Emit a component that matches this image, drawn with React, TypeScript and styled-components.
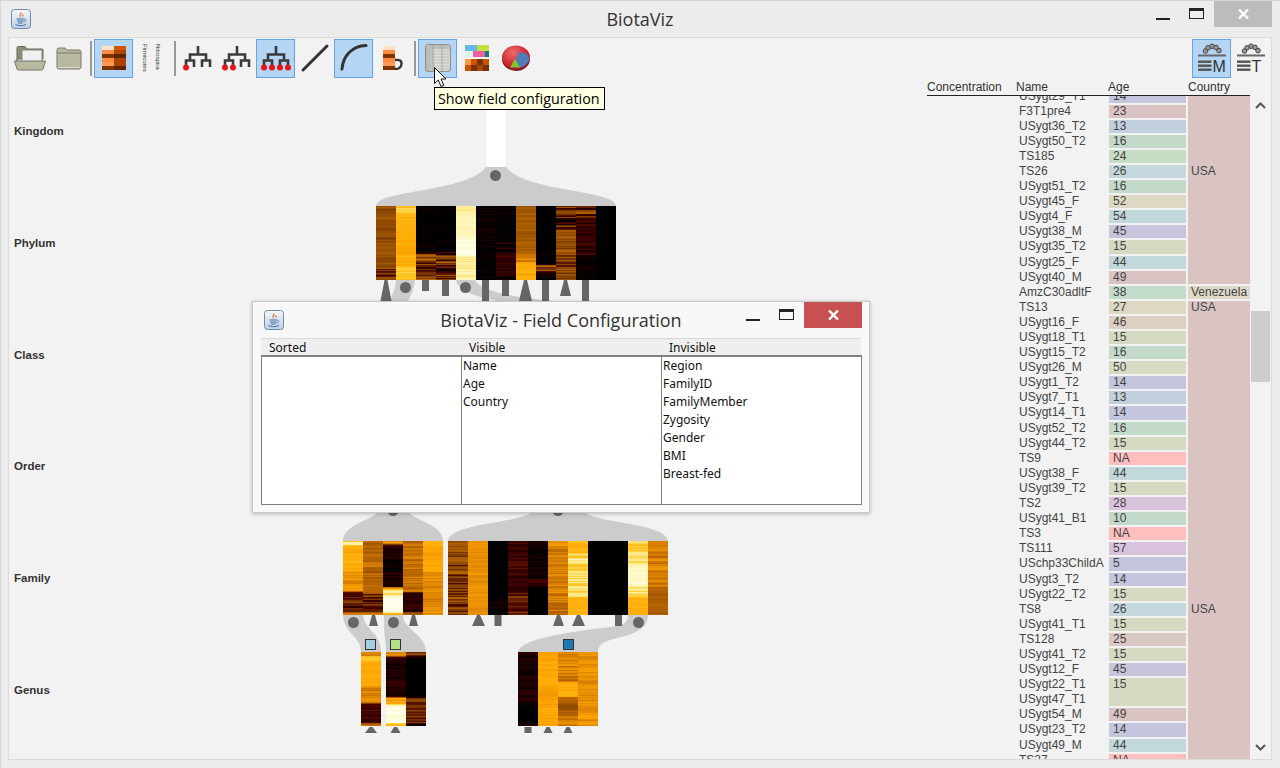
import React from "react";
import styled, { createGlobalStyle } from "styled-components";

const ROW = 15.1;

const GlobalStyle = createGlobalStyle`
  html, body {
    margin: 0;
    padding: 0;
    background: #f0f0f0;
  }
`;

// ---- data ----

interface Row {
  name: string;
  age?: string;
  span?: number;
}

const rows: Row[] = [
  { name: "USygt29_T1", age: "14" },
  { name: "F3T1pre4", age: "23" },
  { name: "USygt36_T2", age: "13" },
  { name: "USygt50_T2", age: "16" },
  { name: "TS185", age: "24" },
  { name: "TS26", age: "26" },
  { name: "USygt51_T2", age: "16" },
  { name: "USygt45_F", age: "52" },
  { name: "USygt4_F", age: "54" },
  { name: "USygt38_M", age: "45" },
  { name: "USygt35_T2", age: "15" },
  { name: "USygt25_F", age: "44" },
  { name: "USygt40_M", age: "49" },
  { name: "AmzC30adltF", age: "38" },
  { name: "TS13", age: "27" },
  { name: "USygt16_F", age: "46" },
  { name: "USygt18_T1", age: "15" },
  { name: "USygt15_T2", age: "16" },
  { name: "USygt26_M", age: "50" },
  { name: "USygt1_T2", age: "14" },
  { name: "USygt7_T1", age: "13" },
  { name: "USygt14_T1", age: "14" },
  { name: "USygt52_T2", age: "16" },
  { name: "USygt44_T2", age: "15" },
  { name: "TS9", age: "NA" },
  { name: "USygt38_F", age: "44" },
  { name: "USygt39_T2", age: "15" },
  { name: "TS2", age: "28" },
  { name: "USygt41_B1", age: "10" },
  { name: "TS3", age: "NA" },
  { name: "TS111", age: "57" },
  { name: "USchp33ChildA", age: "5" },
  { name: "USygt3_T2", age: "14" },
  { name: "USygt22_T2", age: "15" },
  { name: "TS8", age: "26" },
  { name: "USygt41_T1", age: "15" },
  { name: "TS128", age: "25" },
  { name: "USygt41_T2", age: "15" },
  { name: "USygt12_F", age: "45" },
  { name: "USygt22_T1", age: "15", span: 2 },
  { name: "USygt47_T1" },
  { name: "USygt54_M", age: "49" },
  { name: "USygt23_T2", age: "14" },
  { name: "USygt49_M", age: "44" },
  { name: "TS27", age: "NA" },
];

const ageColors: Record<string, string> = {
  "5": "#c3c6dc",
  "10": "#c3dacb",
  "13": "#c3cfdc",
  "14": "#c3c6dc",
  "15": "#d6dac3",
  "16": "#c3dacb",
  "23": "#dac3c3",
  "24": "#c6dcc3",
  "25": "#dac9c3",
  "26": "#c3d7dc",
  "27": "#dcd8c3",
  "28": "#d9c3dc",
  "38": "#c3dccc",
  "44": "#c3d8da",
  "45": "#c9c3dc",
  "46": "#dcd0c3",
  "49": "#dac3c3",
  "50": "#d6dcc3",
  "52": "#dcd8c3",
  "54": "#c3d8da",
  "57": "#d9c3dc",
  NA: "#ffbfbf",
};

const ranks = ["Kingdom", "Phylum", "Class", "Order", "Family", "Genus"];
const sortedFields: string[] = [];
const visibleFields = ["Name", "Age", "Country"];
const invisibleFields = ["Region", "FamilyID", "FamilyMember", "Zygosity", "Gender", "BMI", "Breast-fed"];

// ---- heat maps ----

type Band = [number, number, number, number];

const heatStops: [number, number[]][] = [
  [0, [0, 0, 0]],
  [0.2, [70, 0, 0]],
  [0.35, [135, 70, 0]],
  [0.5, [190, 105, 0]],
  [0.65, [255, 165, 0]],
  [0.8, [255, 200, 40]],
  [0.9, [255, 240, 160]],
  [1, [255, 255, 235]],
];

function heatColor(value: number) {
  const v = Math.max(0, Math.min(1, value));
  for (let i = 1; i < heatStops.length; i++) {
    const [p1, c1] = heatStops[i];
    const [p0, c0] = heatStops[i - 1];
    if (v <= p1) {
      const t = (v - p0) / (p1 - p0);
      const c = c0.map((n, k) => Math.round(n + (c1[k] - n) * t));
      return `rgb(${c[0]},${c[1]},${c[2]})`;
    }
  }
  return "rgb(255,255,235)";
}

function makeRandom(seed: number) {
  let s = seed;
  return () => {
    s = (s * 9301 + 49297) % 233280;
    return s / 233280;
  };
}

const phylumColumns: Band[][] = [
  [[0, 0.8, 0.38, 0.07], [0.8, 0.95, 0.3, 0.15], [0.95, 1, 0.4, 0.05]],
  [[0, 0.1, 0.8, 0.08], [0.1, 0.5, 0.69, 0.04], [0.5, 0.65, 0.65, 0.02], [0.65, 0.8, 0.7, 0.05], [0.8, 1, 0.78, 0.08]],
  [[0, 0.62, 0, 0.05], [0.62, 1, 0.33, 0.2]],
  [[0, 0.62, 0, 0.03], [0.62, 1, 0.3, 0.22]],
  [[0, 0.1, 0.9, 0.05], [0.1, 0.4, 0.93, 0.03], [0.4, 0.65, 0.98, 0.02], [0.65, 1, 0.9, 0.05]],
  [[0, 1, 0.01, 0.06]],
  [[0, 0.5, 0.01, 0.06], [0.5, 1, 0.09, 0.13]],
  [[0, 0.6, 0.43, 0.05], [0.6, 0.75, 0.55, 0.08], [0.75, 1, 0.68, 0.05]],
  [[0, 0.62, 0, 0], [0.62, 0.77, 0.02, 0.05], [0.77, 0.88, 0.3, 0.25], [0.88, 1, 0.04, 0.05]],
  [[0, 0.3, 0.2, 0.25], [0.3, 0.6, 0.38, 0.1], [0.6, 1, 0.35, 0.12]],
  [[0, 0.2, 0.25, 0.2], [0.2, 0.65, 0.12, 0.13], [0.65, 1, 0.03, 0.06]],
  [[0, 1, 0, 0]],
];

const familyLeft: Band[][] = [
  [[0, 0.05, 0.85, 0.1], [0.05, 0.4, 0.67, 0.05], [0.4, 0.67, 0.6, 0.05], [0.67, 0.95, 0.22, 0.15], [0.95, 1, 0.6, 0.02]],
  [[0, 0.7, 0.48, 0.08], [0.7, 0.95, 0.25, 0.15], [0.95, 1, 0.6, 0]],
  [[0, 0.04, 0.6, 0.1], [0.04, 0.62, 0.1, 0.1], [0.62, 0.72, 0.85, 0.08], [0.72, 0.95, 1, 0.03], [0.95, 1, 0.75, 0.1]],
  [[0, 0.68, 0.5, 0.08], [0.68, 0.95, 0.12, 0.1], [0.95, 1, 0.5, 0.05]],
  [[0, 0.4, 0.67, 0.05], [0.4, 1, 0.58, 0.05]],
];

const familyRight: Band[][] = [
  [[0, 1, 0.33, 0.15]],
  [[0, 1, 0.6, 0.03]],
  [[0, 0.75, 0, 0.02], [0.75, 0.9, 0.04, 0.05], [0.9, 1, 0, 0]],
  [[0, 0.7, 0.17, 0.08], [0.7, 1, 0.28, 0.1]],
  [[0, 0.5, 0.04, 0.06], [0.5, 0.6, 0.1, 0.12], [0.6, 1, 0, 0]],
  [[0, 0.8, 0.55, 0.08], [0.8, 1, 0.5, 0.08]],
  [[0, 0.15, 0.72, 0.05], [0.15, 0.75, 0.85, 0.08], [0.75, 1, 0.7, 0.04]],
  [[0, 1, 0, 0.01]],
  [[0, 1, 0, 0.01]],
  [[0, 0.3, 0.82, 0.08], [0.3, 0.6, 0.95, 0.03], [0.6, 0.75, 0.85, 0.08], [0.75, 1, 0.7, 0.03]],
  [[0, 0.6, 0.55, 0.06], [0.6, 1, 0.45, 0.05]],
];

const genusA: Band[][] = [
  [[0, 0.05, 0.55, 0.03], [0.05, 0.1, 0.85, 0.05], [0.1, 0.45, 0.67, 0.04], [0.45, 0.68, 0.56, 0.06], [0.68, 0.95, 0.18, 0.12], [0.95, 1, 0.55, 0]],
];

const genusB: Band[][] = [
  [[0, 0.05, 0.6, 0.05], [0.05, 0.6, 0.1, 0.08], [0.6, 0.7, 0.7, 0.1], [0.7, 0.95, 0.98, 0.04], [0.95, 1, 0.7, 0]],
  [[0, 0.05, 0.3, 0.1], [0.05, 0.6, 0, 0], [0.6, 0.95, 0.3, 0.1], [0.95, 1, 0, 0]],
];

const genusC: Band[][] = [
  [[0, 0.7, 0.08, 0.07], [0.7, 0.95, 0, 0], [0.95, 1, 0.1, 0]],
  [[0, 1, 0.66, 0.04]],
  [[0, 0.4, 0.55, 0.08], [0.4, 0.6, 0.7, 0.05], [0.6, 0.85, 0.45, 0.08], [0.85, 1, 0.55, 0.05]],
  [[0, 1, 0.6, 0.05]],
];

function HeatMap({ x, y, columns, seed }: { x: number; y: number; columns: Band[][]; seed: number }) {
  const random = makeRandom(seed);
  const height = 74;
  const cells: React.ReactNode[] = [];
  columns.forEach((bands, c) => {
    let wobble = 0;
    let level = bands[0][2];
    for (let r = 0; r < height; r++) {
      const frac = r / height;
      const band = bands.find((b) => frac >= b[0] && frac < b[1]) ?? bands[bands.length - 1];
      // bands run into each other over a few rows, the noise is only lightly smoothed
      level += (band[2] - level) * 0.55;
      wobble = 0.35 * wobble + 0.65 * (random() - 0.5) * 2;
      const value = level + wobble * band[3] * 1.25;
      cells.push(<rect key={`${c}-${r}`} x={x + c * 20} y={y + r} width={20} height={1} fill={heatColor(value)} />);
    }
  });
  return <g shapeRendering="crispEdges">{cells}</g>;
}

// ---- drawn icons ----

function JavaIcon() {
  return (
    <svg width="20" height="20" viewBox="0 0 20 20">
      <defs>
        <linearGradient id="javaBg" x1="0" y1="0" x2="0" y2="1">
          <stop offset="0" stopColor="#f2f7fc" />
          <stop offset="1" stopColor="#bcd0e4" />
        </linearGradient>
      </defs>
      <rect x="0.5" y="0.5" width="19" height="19" rx="3" fill="url(#javaBg)" stroke="#6f8aa5" />
      <path d="M10 3 C12 5 8 6 10 9 C7 7 9 5 10 3 Z M12 5 C11 6 11 7 11.5 8 C12.5 7 13 6 12 5 Z" fill="#e8701a" />
      <path d="M5.5 10 H13 M6 12 H12.5 M7 14 H11.5" stroke="#3f6f9f" strokeWidth="1" fill="none" />
      <path d="M13 10 C15.5 10 15.5 12.5 12.5 13" stroke="#3f6f9f" strokeWidth="0.8" fill="none" />
      <path d="M4.5 15.5 C7 17 12 17 15 15.5" stroke="#3f6f9f" strokeWidth="1" fill="none" />
    </svg>
  );
}

function OpenFolderIcon() {
  return (
    <svg width="32" height="26" viewBox="0 0 32 26">
      <path d="M3 23 V3 Q3 1.5 4.5 1.5 H11 L13 4 H28 Q29 4 29 5 V14 H3 Z" fill="#8d8d78" stroke="#66665a" />
      <rect x="8" y="5" width="20" height="12" fill="#f0f0f0" stroke="#88887a" />
      <path d="M0.5 16 H31.5 L29 24 Q28.8 25 27.5 25 H4.5 Q3.2 25 3 24 Z" fill="#b9b9a2" stroke="#77776a" />
    </svg>
  );
}

function ClosedFolderIcon() {
  return (
    <svg width="26" height="24" viewBox="0 0 26 24">
      <path d="M1 4 Q1 2 3 2 H9 L11 4 H23 Q25 4 25 6 V21 Q25 23 23 23 H3 Q1 23 1 21 Z" fill="#b9b9a2" stroke="#7a7a6c" />
      <path d="M1.5 7 H24.5" stroke="#8e8e7d" strokeWidth="1.5" />
      <path d="M2 21.5 H24" stroke="#dcdccb" strokeWidth="1" />
    </svg>
  );
}

const stackLeft = ["#ffe0c8", "#ff8c45", "#7f3300", "#ff8c45", "#ff9a55", "#7f3300"];
const stackRight = ["#d45500", "#b04500", "#5c2500", "#a84400", "#a84400", "#5c2500"];

function HeatStackIcon() {
  return (
    <svg width="24" height="24" viewBox="0 0 24 24" shapeRendering="crispEdges">
      {stackLeft.map((fill, i) => (
        <rect key={i} x="0" y={i * 4} width="12" height="4" fill={fill} />
      ))}
      {stackRight.map((fill, i) => (
        <rect key={i} x="12" y={i * 4} width="12" height="4" fill={fill} />
      ))}
    </svg>
  );
}

function SidewaysTextIcon() {
  return (
    <svg width="24" height="30" viewBox="0 0 24 30">
      <text transform="translate(2 1) rotate(90)" fontSize="6" fontFamily="Liberation Sans, sans-serif" fill="#333">
        Firmicutes
      </text>
      <text transform="translate(15 1) rotate(90)" fontSize="6" fontFamily="Liberation Sans, sans-serif" fill="#333">
        Nitrospira
      </text>
    </svg>
  );
}

function TreeIcon({ dots }: { dots: number }) {
  const leaves = [4, 12, 20, 28];
  return (
    <svg width="32" height="32" viewBox="0 0 32 32">
      <path
        d="M16 4 V12.5 M8 18.5 V12.5 H24 V18.5 M4 25 V18.5 H12 V25 M20 25 V18.5 H28 V25"
        fill="none"
        stroke="#3a3a3a"
        strokeWidth="2.6"
      />
      {leaves.slice(0, dots).map((x) => (
        <circle key={x} cx={x} cy="25.5" r="3" fill="#e8141c" />
      ))}
    </svg>
  );
}

function LineIcon() {
  return (
    <svg width="32" height="32" viewBox="0 0 32 32">
      <path d="M4 28 L28 4" stroke="#333" strokeWidth="3" strokeLinecap="round" />
    </svg>
  );
}

function CurveIcon() {
  return (
    <svg width="32" height="32" viewBox="0 0 32 32">
      <path d="M4 27 C5 14 14 4 28 3.5" fill="none" stroke="#333" strokeWidth="3" strokeLinecap="round" />
    </svg>
  );
}

function StackLoopIcon() {
  return (
    <svg width="20" height="24" viewBox="0 0 20 24">
      <g shapeRendering="crispEdges">
        {stackLeft.map((fill, i) => (
          <rect key={i} x="0" y={i * 4} width="12" height="4" fill={fill} />
        ))}
      </g>
      <path d="M12 14 Q19 13 18.5 18 Q18 23 12 23" fill="none" stroke="#333" strokeWidth="2.4" />
    </svg>
  );
}

function TableIcon() {
  return (
    <svg width="26" height="28" viewBox="0 0 26 28">
      <defs>
        <linearGradient id="tableBg" x1="0" y1="0" x2="1" y2="0">
          <stop offset="0" stopColor="#b4b4af" />
          <stop offset="0.3" stopColor="#c6c6c1" />
          <stop offset="0.36" stopColor="#dededa" />
          <stop offset="1" stopColor="#d6d6d1" />
        </linearGradient>
      </defs>
      <rect x="0.5" y="0.5" width="25" height="27" rx="2.5" fill="url(#tableBg)" stroke="#8e8e8e" />
      <rect x="1" y="1" width="24" height="4" fill="#bcbcb8" />
      {[7, 10, 13, 16, 19, 22, 25].map((y) => (
        <path key={y} d={`M1.5 ${y} H24.5`} stroke="#c2c2bc" strokeWidth="1" />
      ))}
      <path d="M8 1 V27 M17 1 V27" stroke="#a8a8a4" strokeWidth="1" />
    </svg>
  );
}

function ColorGridIcon() {
  const checker = [
    ["#ff9944", "#cc5500", "#7a3000", "#cc5500"],
    ["#cc5500", "#7a3000", "#a84400", "#7a3000"],
  ];
  return (
    <svg width="24" height="26" viewBox="0 0 24 26" shapeRendering="crispEdges">
      <rect x="0" y="0" width="12" height="6" fill="#66b8e8" />
      <rect x="12" y="0" width="12" height="6" fill="#c5e03c" />
      <rect x="0" y="6" width="8" height="6" fill="#d8f5e8" />
      <rect x="8" y="6" width="12" height="6" fill="#ee5f9e" />
      <rect x="20" y="6" width="4" height="6" fill="#0f7f80" />
      {checker.map((row, r) =>
        row.map((fill, c) => <rect key={`${r}${c}`} x={c * 6} y={14 + r * 6} width="6" height="6" fill={fill} />),
      )}
    </svg>
  );
}

function PieIcon() {
  return (
    <svg width="30" height="28" viewBox="0 0 30 28">
      <defs>
        <radialGradient id="pieRed" cx="0.4" cy="0.3" r="0.8">
          <stop offset="0" stopColor="#f06a6a" />
          <stop offset="0.7" stopColor="#c8202c" />
          <stop offset="1" stopColor="#8c1420" />
        </radialGradient>
      </defs>
      <ellipse cx="15" cy="15" rx="14" ry="12" fill="#7f1a22" />
      <ellipse cx="15" cy="13.5" rx="14" ry="12" fill="url(#pieRed)" />
      <path d="M14 17 L18 8 C24 8 28 11 28.5 15 C27 20 22 23 18 24 Z" fill="#4f7db8" />
      <path d="M14 15 L19 23.5 L9 23.5 Z" fill="#86c22c" />
    </svg>
  );
}

const archLoops: [number, number][] = [
  [9.5, 9],
  [12, 5.8],
  [16, 4.2],
  [20, 5.4],
  [23, 8.6],
];

function BarsIcon({ letter }: { letter: string }) {
  return (
    <svg width="32" height="32" viewBox="0 0 32 32">
      {archLoops.map(([cx, cy]) => (
        <circle key={cx} cx={cx} cy={cy} r="2.3" fill="#9a9a9a" stroke="#444" strokeWidth="1" />
      ))}
      <rect x="2" y="12.5" width="28" height="2" fill="#666" />
      <rect x="2" y="18.5" width="13.5" height="2.4" fill="#555" />
      <rect x="2" y="22.5" width="13.5" height="2.4" fill="#555" />
      <rect x="2" y="26.5" width="13.5" height="2.4" fill="#555" />
      <text x="16.5" y="29.5" fontSize="16" fontFamily="Liberation Sans, sans-serif" fill="#333">
        {letter}
      </text>
    </svg>
  );
}

function Chevron({ down }: { down?: boolean }) {
  return (
    <svg width="11" height="7" viewBox="0 0 11 7">
      <path d={down ? "M1 1 L5.5 5.5 L10 1" : "M1 6 L5.5 1.5 L10 6"} fill="none" stroke="#555" strokeWidth="2" />
    </svg>
  );
}

function CloseGlyph() {
  return (
    <svg width="11" height="10" viewBox="0 0 11 10">
      <path d="M1 0.5 L10 9.5 M10 0.5 L1 9.5" stroke="#fff" strokeWidth="2.4" />
    </svg>
  );
}

function PointerCursor() {
  return (
    <svg width="14" height="21" viewBox="0 0 14 21">
      <path d="M0.5 0.5 V16.5 L4.3 13 L7 19.5 L9.8 18.4 L7 12 H12 Z" fill="#fff" stroke="#111" strokeWidth="1" />
    </svg>
  );
}

// ---- tree drawing, page coordinates through the viewBox ----

const NODE = "#666666";
const FLOW = "#cccccc";

function Node({ x, y }: { x: number; y: number }) {
  return <circle cx={x} cy={y} r="5.5" fill={NODE} />;
}

function Tri({ x, w, top, bottom }: { x: number; w: number; top: number; bottom: number }) {
  return <path d={`M${x - 1.5} ${top} H${x + 1.5} L${x + w / 2} ${bottom} H${x - w / 2} Z`} fill={NODE} />;
}

function Bar({ x, top, bottom }: { x: number; top: number; bottom: number }) {
  return <rect x={x - 3.5} y={top} width="7" height={bottom - top} fill={NODE} />;
}

function Marker({ x, fill }: { x: number; fill: string }) {
  return <rect x={x - 5} y="639.5" width="10" height="10" fill={fill} stroke="#333" strokeWidth="1" />;
}

function TreeDrawing() {
  return (
    <TreeSvg viewBox="111 80 800 679" width="800" height="679">
      <rect x="486" y="105" width="20" height="64" fill="#fff" stroke="#e6e6e6" strokeWidth="0.5" />
      <path d="M376 206 C376 190 468 192 486 167 H506 C524 192 616 190 616 206 Z" fill={FLOW} />
      <Node x={495.5} y={175.5} />
      <HeatMap x={376} y={206} columns={phylumColumns} seed={11} />

      <path d="M396 280 H415 C414 290 410 296 408 302 H390 C392 294 396 288 396 280 Z" fill={FLOW} />
      <path d="M456 280 H475 C480 292 520 298 562 302 H505 C480 298 458 292 456 280 Z" fill={FLOW} />
      <Tri x={386} w={11} top={280} bottom={301} />
      <Node x={405.5} y={287.5} />
      <Bar x={425.5} top={280} bottom={291} />
      <Bar x={445.5} top={280} bottom={296} />
      <Node x={465.5} y={287.5} />
      <Bar x={485.5} top={280} bottom={302} />
      <Bar x={505.5} top={280} bottom={296} />
      <Tri x={525.5} w={13} top={280} bottom={301} />
      <Bar x={545.5} top={280} bottom={302} />
      <Tri x={565.5} w={11} top={280} bottom={296} />
      <Bar x={585.5} top={280} bottom={302} />

      <path d="M343 541 C343 526 366 522 377 513 H409 C420 522 443 526 443 541 Z" fill={FLOW} />
      <path d="M448 541 C450 524 510 524 532 513 H585 C606 524 666 524 668 541 Z" fill={FLOW} />
      <Node x={393} y={510.5} />
      <Node x={558} y={510.5} />
      <HeatMap x={343} y={541} columns={familyLeft} seed={23} />
      <HeatMap x={448} y={541} columns={familyRight} seed={37} />

      <path d="M343 615 H363 C364 630 381 632 381 652 H361 C361 636 344 634 343 615 Z" fill={FLOW} />
      <path d="M384 615 H403 C403 630 426 634 426 652 H386 C386 640 383 630 384 615 Z" fill={FLOW} />
      <path
        d="M518 652 C520 640 560 633 610 627 C625 625 628 622 628 615 H648 C648 632 628 635 610 640 C600 643 598 648 598 652 Z"
        fill={FLOW}
      />

      <Node x={353.5} y={622.5} />
      <Tri x={373.5} w={9} top={615} bottom={626} />
      <Node x={393.5} y={622.5} />
      <Tri x={413.5} w={9} top={615} bottom={626} />
      <Tri x={478.5} w={13} top={615} bottom={626} />
      <Bar x={498} top={615} bottom={626} />
      <Tri x={558.5} w={11} top={615} bottom={626} />
      <Tri x={578.5} w={13} top={615} bottom={626} />
      <Bar x={618.5} top={615} bottom={626} />
      <Node x={638.5} y={622.5} />

      <Marker x={370.5} fill="#a6cee3" />
      <Marker x={395.5} fill="#b2df8a" />
      <Marker x={568.5} fill="#1f78b4" />

      <HeatMap x={361} y={652} columns={genusA} seed={41} />
      <HeatMap x={386} y={652} columns={genusB} seed={53} />
      <HeatMap x={518} y={652} columns={genusC} seed={67} />

      <Tri x={371} w={12} top={727} bottom={733} />
      <Tri x={395.5} w={10} top={727} bottom={733} />
      <Bar x={528} top={727} bottom={733} />
      <Tri x={548} w={9} top={727} bottom={733} />
      <Tri x={568} w={9} top={727} bottom={733} />
    </TreeSvg>
  );
}

function FieldColumn({ items }: { items: string[] }) {
  return (
    <FieldList>
      {items.map((item) => (
        <FieldItem key={item}>{item}</FieldItem>
      ))}
    </FieldList>
  );
}

export default function App() {
  return (
    <>
      <GlobalStyle />
      <Window>
        <TitleBar>
          <TitleIcon>
            <JavaIcon />
          </TitleIcon>
          <Title>BiotaViz</Title>
          <WindowControls>
            <MinimizeButton />
            <MaximizeButton />
            <CloseButton>
              <CloseGlyph />
            </CloseButton>
          </WindowControls>
        </TitleBar>

        <Frame>
          <Toolbar>
            <ToolButton><OpenFolderIcon /></ToolButton>
            <ToolButton><ClosedFolderIcon /></ToolButton>
            <Separator />
            <ToolButton $active><HeatStackIcon /></ToolButton>
            <ToolButton><SidewaysTextIcon /></ToolButton>
            <Separator />
            <ToolButton><TreeIcon dots={1} /></ToolButton>
            <ToolButton><TreeIcon dots={2} /></ToolButton>
            <ToolButton $active><TreeIcon dots={4} /></ToolButton>
            <ToolButton><LineIcon /></ToolButton>
            <ToolButton $active><CurveIcon /></ToolButton>
            <ToolButton><StackLoopIcon /></ToolButton>
            <Separator />
            <ToolButton $active><TableIcon /></ToolButton>
            <ToolButton><ColorGridIcon /></ToolButton>
            <ToolButton><PieIcon /></ToolButton>
            <ToolbarSpacer />
            <ToolButton $active><BarsIcon letter="M" /></ToolButton>
            <ToolButton><BarsIcon letter="T" /></ToolButton>
          </Toolbar>

          <Main>
            <RankColumn>
              {ranks.map((rank) => (
                <RankLabel key={rank}>{rank}</RankLabel>
              ))}
            </RankColumn>
            <TreeDrawing />
            <TablePanel>
              <TableHeader>
                <HeaderCell>Concentration</HeaderCell>
                <HeaderCell>Name</HeaderCell>
                <HeaderCell>Age</HeaderCell>
                <HeaderCell>Country</HeaderCell>
              </TableHeader>
              <TableBody>
                <TableViewport>
                  <RowGrid>
                    <CountryGroup $row={1} $span={13} $gapTop={0}>
                      <CountryLabel $row={6}>USA</CountryLabel>
                    </CountryGroup>
                    <CountryGroup $row={14} $span={1} $gapTop={1} $alt>
                      <CountryLabel $row={1} $inset>Venezuela</CountryLabel>
                    </CountryGroup>
                    <CountryGroup $row={15} $span={31} $gapTop={1}>
                      <CountryLabel $row={1} $inset>USA</CountryLabel>
                      <CountryLabel $row={21} $inset>USA</CountryLabel>
                    </CountryGroup>
                    {rows.map((row, i) => (
                      <React.Fragment key={row.name + i}>
                        <NameCell $row={i + 1}>{row.name}</NameCell>
                        {row.age && (
                          <AgeCell $row={i + 1} $span={row.span ?? 1} $color={ageColors[row.age]}>
                            {row.age}
                          </AgeCell>
                        )}
                      </React.Fragment>
                    ))}
                  </RowGrid>
                </TableViewport>
                <Scrollbar>
                  <ScrollArrow><Chevron /></ScrollArrow>
                  <ScrollThumb />
                  <ScrollArrow><Chevron down /></ScrollArrow>
                </Scrollbar>
              </TableBody>
            </TablePanel>
          </Main>
        </Frame>

        <Tooltip>Show field configuration</Tooltip>
        <CursorSpot>
          <PointerCursor />
        </CursorSpot>

        <Dialog>
          <DialogTitleBar>
            <TitleIcon>
              <JavaIcon />
            </TitleIcon>
            <DialogTitle>BiotaViz - Field Configuration</DialogTitle>
            <DialogControls>
              <MinimizeButton />
              <MaximizeButton />
              <CloseButton $alert>
                <CloseGlyph />
              </CloseButton>
            </DialogControls>
          </DialogTitleBar>
          <FieldTable>
            <FieldHeaders>
              <FieldHeader>Sorted</FieldHeader>
              <FieldHeader>Visible</FieldHeader>
              <FieldHeader>Invisible</FieldHeader>
            </FieldHeaders>
            <FieldColumns>
              <FieldColumn items={sortedFields} />
              <FieldColumn items={visibleFields} />
              <FieldColumn items={invisibleFields} />
            </FieldColumns>
          </FieldTable>
        </Dialog>
      </Window>
    </>
  );
}

const Window = styled.div`
  position: relative;
  width: 1280px;
  height: 768px;
  overflow: hidden;
  background: #ececec;
  box-shadow: inset 1px 1px 0 #d6d6d6;
  font-family: "Liberation Sans", Arial, sans-serif;
`;

const TitleBar = styled.header`
  display: grid;
  grid-template-columns: 1fr auto 1fr;
  align-items: center;
  height: 37px;
`;

const TitleIcon = styled.div`
  display: flex;
  width: 20px;
  height: 20px;
  margin-left: 11px;
`;

const Title = styled.div`
  font-family: "Open Sans", sans-serif;
  font-size: 18px;
  color: #333;
`;

const WindowControls = styled.div`
  display: flex;
  align-items: flex-start;
  align-self: start;
  justify-self: end;
  margin: 1px 8px 0 0;
`;

const MinimizeButton = styled.div`
  width: 14px;
  height: 2px;
  margin-top: 17px;
  background: #222;
`;

const MaximizeButton = styled.div`
  box-sizing: border-box;
  width: 15px;
  height: 11px;
  margin: 7px 10px 0 19px;
  border: 1px solid #222;
  border-top-width: 3px;
`;

const CloseButton = styled.div<{ $alert?: boolean }>`
  display: flex;
  align-items: center;
  justify-content: center;
  width: 58px;
  height: 26px;
  background: ${({ $alert }) => ($alert ? "#c75050" : "#bcbcbc")};
`;

const Frame = styled.div`
  margin: 0 8px;
  background: #f2f2f2;
  border: 1px solid #dcdcdc;
`;

const Toolbar = styled.div`
  display: flex;
  align-items: center;
  height: 42px;
  padding: 0 1px;
`;

const ToolButton = styled.div<{ $active?: boolean }>`
  display: flex;
  align-items: center;
  justify-content: center;
  box-sizing: border-box;
  width: 39px;
  height: 39px;
  margin-top: -2px;
  background: ${({ $active }) => ($active ? "#b5d5f5" : "transparent")};
  border: 1px solid ${({ $active }) => ($active ? "#64a4e6" : "transparent")};
`;

const Separator = styled.div`
  box-sizing: border-box;
  width: 6px;
  height: 35px;
  margin-top: -2px;
  padding-left: 2px;

  &::before {
    content: "";
    display: block;
    width: 1.5px;
    height: 100%;
    background: #999;
  }
`;

const ToolbarSpacer = styled.div`
  flex: 1;
`;

const Main = styled.div`
  display: flex;
  height: 679px;
`;

const RankColumn = styled.div`
  box-sizing: border-box;
  width: 102px;
  flex-shrink: 0;
  padding: 44px 0 0 5px;
`;

const RankLabel = styled.div`
  height: 111.8px;
  font-size: 11.5px;
  line-height: 14px;
  font-weight: bold;
  color: #333;
`;

const TreeSvg = styled.svg`
  flex-shrink: 0;
  display: block;
`;

const TablePanel = styled.div`
  display: flex;
  flex-direction: column;
  margin-left: 16px;
  width: 343px;
  flex-shrink: 0;
`;

const TableHeader = styled.div`
  display: grid;
  grid-template-columns: 89px 92px 80px 62px;
  width: 323px;
  height: 16px;
  box-sizing: border-box;
  border-bottom: 1px solid #222;
  font-size: 12px;
  color: #333;
`;

const HeaderCell = styled.div`
  line-height: 14px;
  white-space: nowrap;
`;

const TableBody = styled.div`
  display: flex;
  flex: 1;
  min-height: 0;
`;

const TableViewport = styled.div`
  width: 323px;
  overflow: hidden;
`;

const RowGrid = styled.div`
  display: grid;
  grid-template-columns: 89px 92px 80px 62px;
  grid-auto-rows: ${ROW}px;
  margin-top: -7.5px;
  font-size: 12px;
  color: #444;
`;

const NameCell = styled.div<{ $row: number }>`
  grid-column: 2;
  grid-row: ${({ $row }) => $row};
  padding-left: 3px;
  line-height: ${ROW}px;
  white-space: nowrap;
`;

const AgeCell = styled.div<{ $row: number; $span: number; $color: string }>`
  grid-column: 3;
  grid-row: ${({ $row }) => $row} / span ${({ $span }) => $span};
  margin: 1px 2px 1px 1px;
  padding-left: 4px;
  line-height: 13px;
  background: ${({ $color }) => $color};
`;

const CountryGroup = styled.div<{ $row: number; $span: number; $gapTop: number; $alt?: boolean }>`
  grid-column: 4;
  grid-row: ${({ $row }) => $row} / span ${({ $span }) => $span};
  display: grid;
  grid-auto-rows: ${ROW}px;
  margin: ${({ $gapTop }) => $gapTop}px 0 1px;
  background: ${({ $alt }) => ($alt ? "#ddd8c8" : "#d9c3c3")};
`;

const CountryLabel = styled.div<{ $row: number; $inset?: boolean }>`
  grid-row: ${({ $row }) => $row};
  padding-left: 3px;
  line-height: ${({ $inset }) => ($inset ? "13px" : `${ROW}px`)};
  white-space: nowrap;
`;

const Scrollbar = styled.div`
  position: relative;
  width: 20px;
  display: flex;
  flex-direction: column;
  align-items: center;
  justify-content: space-between;
  padding: 6px 0 8px;
  box-sizing: border-box;
`;

const ScrollArrow = styled.div`
  display: flex;
  height: 7px;
`;

const ScrollThumb = styled.div`
  position: absolute;
  top: 215px;
  left: 1px;
  width: 19px;
  height: 71px;
  background: #cdcdcd;
`;

const Tooltip = styled.div`
  position: absolute;
  top: 87px;
  left: 434px;
  box-sizing: border-box;
  width: 171px;
  height: 23px;
  padding-left: 3px;
  border: 1px solid #000;
  background: #ffffe1;
  font-family: "Open Sans", sans-serif;
  font-size: 14.3px;
  line-height: 21px;
  color: #000;
  white-space: nowrap;
`;

const CursorSpot = styled.div`
  position: absolute;
  top: 67px;
  left: 434px;
  display: flex;
`;

const Dialog = styled.div`
  position: absolute;
  top: 301px;
  left: 252px;
  box-sizing: border-box;
  width: 618px;
  height: 212px;
  background: #f8f8f8;
  border: 1px solid #c8c8c8;
  box-shadow: 0 1px 4px rgba(0, 0, 0, 0.25);
`;

const DialogTitleBar = styled.div`
  display: grid;
  grid-template-columns: 1fr auto 1fr;
  align-items: center;
  height: 36px;
`;

const DialogTitle = styled.div`
  font-family: "Open Sans", sans-serif;
  font-size: 18px;
  color: #333;
`;

const DialogControls = styled.div`
  display: flex;
  align-items: flex-start;
  align-self: start;
  justify-self: end;
  margin-right: 7px;
`;

const FieldTable = styled.div`
  margin: 0 8px;
  border-top: 1px solid #d8d8d8;
`;

const FieldHeaders = styled.div`
  display: grid;
  grid-template-columns: repeat(3, 200px);
  height: 16px;
  background: #efefef;
`;

const FieldHeader = styled.div`
  padding-left: 8px;
  font-family: "Noto Sans", sans-serif;
  font-size: 12px;
  line-height: 17px;
  color: #111;
`;

const FieldColumns = styled.div`
  display: grid;
  grid-template-columns: repeat(3, 200px);
  height: 150px;
`;

const FieldList = styled.div`
  box-sizing: border-box;
  padding: 0 0 0 1px;
  background: #fff;
  border: 1px solid #808080;
  border-top-width: 2px;
  margin-right: -1px;
`;

const FieldItem = styled.div`
  height: 18px;
  font-family: "Noto Sans", sans-serif;
  font-size: 12px;
  line-height: 18px;
  color: #111;
`;
